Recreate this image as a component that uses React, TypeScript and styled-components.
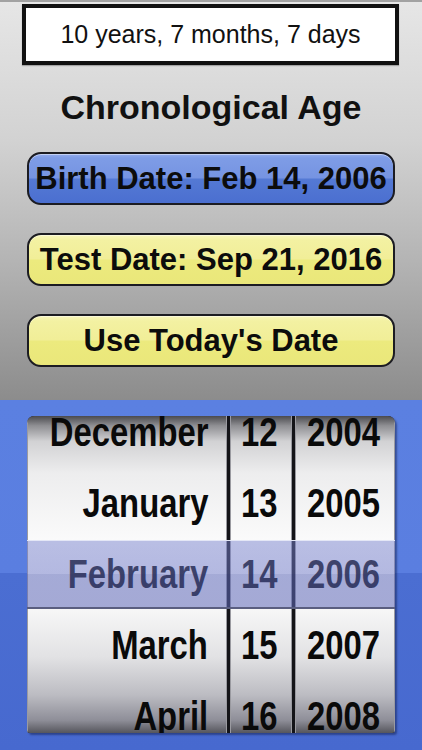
import React from "react";
import styled, { createGlobalStyle } from "styled-components";

const Global = createGlobalStyle`
  html, body { margin: 0; padding: 0; }
  body { width: 422px; height: 750px; overflow: hidden; font-family: "Liberation Sans", Arial, sans-serif; }
  * { box-sizing: border-box; }
`;

const Screen = styled.div`
  width: 422px;
  height: 750px;
  display: flex;
  flex-direction: column;
`;

const TopPanel = styled.div`
  height: 400px;
  display: flex;
  flex-direction: column;
  align-items: flex-start;
  border-top: 2px solid #a2a2a2;
  background: linear-gradient(to bottom, #e6e6e6 0%, #d2d2d2 35%, #b4b4b4 65%, #8c8c8c 100%);
`;

const ResultBox = styled.div`
  margin: 2px 0 0 22px;
  width: 377px;
  height: 61px;
  border: 4px solid #111;
  background: #fff;
  display: flex;
  align-items: center;
  justify-content: center;
  font-size: 25px;
  color: #111;
  box-shadow: 0 1px 1px rgba(0, 0, 0, 0.25);
`;

const Title = styled.div`
  margin-top: 22px;
  width: 422px;
  text-align: center;
  font-size: 34px;
  line-height: 40px;
  font-weight: bold;
  color: #111;
`;

const GlossButton = styled.div<{ $tone: "blue" | "yellow"; $gap: number }>`
  margin: ${(p) => p.$gap}px 0 0 27px;
  width: 368px;
  height: 53px;
  border: 2px solid #1c1c22;
  border-radius: 14px;
  display: flex;
  align-items: center;
  justify-content: center;
  font-size: 31px;
  font-weight: bold;
  color: #0c0c0c;
  background: ${(p) =>
    p.$tone === "blue"
      ? "linear-gradient(to bottom, #94acec 0%, #7e9ce6 8%, #7694e2 48%, #5479d4 52%, #4b6fd0 100%)"
      : "linear-gradient(to bottom, #f8f6bc 0%, #f3f1a2 10%, #f1ee98 48%, #ecea7e 52%, #eae77a 100%)"};
  box-shadow: inset 0 1px 0 rgba(255, 255, 255, 0.45);
`;

const BottomPanel = styled.div`
  flex: 1;
  padding: 16px 0 0 27px;
  background: linear-gradient(to bottom, #5b80e1 0%, #5a7ee0 173px, #4b6ed2 173px, #4769cf 100%);
`;

const Picker = styled.div`
  position: relative;
  width: 368px;
  height: 317px;
  border-radius: 7px 7px 3px 3px;
  overflow: hidden;
  display: flex;
  gap: 3px;
  background: #141418;
  box-shadow: 2px 2px 2px rgba(10, 20, 60, 0.45);
`;

const Wheel = styled.div<{ $w: number }>`
  width: ${(p) => p.$w}px;
  height: 100%;
  overflow: hidden;
  border-left: 1px solid #9a9aa0;
  border-right: 1px solid #9a9aa0;
  background: linear-gradient(
    to bottom,
    #4a4a4e 0%,
    #8e8e92 3%,
    #d2d2d4 8%,
    #ededee 18%,
    #fbfbfb 40%,
    #f8f8f8 60%,
    #e2e2e4 76%,
    #bcbcc2 88%,
    #8e8e98 96%,
    #55555c 100%
  );
`;

const WheelList = styled.div`
  margin-top: -19px;
  display: flex;
  flex-direction: column;
`;

const WheelRow = styled.div<{ $align: "right" | "center" }>`
  height: 71px;
  display: flex;
  align-items: center;
  justify-content: ${(p) => (p.$align === "right" ? "flex-end" : "center")};
  padding: ${(p) => (p.$align === "right" ? "0 18px 0 0" : "0 4px 0 0")};
  white-space: nowrap;
`;

const WheelText = styled.span<{ $align: "right" | "center"; $selected?: boolean }>`
  display: block;
  flex: none;
  line-height: 71px;
  font-family: "Liberation Sans", Arial, sans-serif;
  font-weight: bold;
  font-size: 40px;
  color: #0a0a0a;
  transform: scaleX(0.82);
  transform-origin: ${(p) => (p.$align === "right" ? "right center" : "center center")};
  text-shadow: ${(p) => (p.$selected ? "0 1px 0 rgba(255,255,255,0.9)" : "none")};
`;

const SelectionBand = styled.div`
  position: absolute;
  left: 0;
  right: 0;
  top: 124px;
  height: 69px;
  border-top: 1px solid #e4e7f6;
  border-bottom: 2px solid #5a5e80;
  background: linear-gradient(
    to bottom,
    rgba(120, 130, 205, 0.5) 0%,
    rgba(110, 120, 200, 0.5) 50%,
    rgba(95, 105, 185, 0.55) 50%,
    rgba(95, 105, 185, 0.55) 100%
  );
  pointer-events: none;
`;

const months = ["December", "January", "February", "March", "April"];
const days = ["12", "13", "14", "15", "16"];
const years = ["2004", "2005", "2006", "2007", "2008"];

function Column({ items, width, align }: { items: string[]; width: number; align: "right" | "center" }) {
  return (
    <Wheel $w={width}>
      <WheelList>
        {items.map((it, i) => (
          <WheelRow key={it} $align={align}>
            <WheelText $align={align} $selected={i === 2}>
              {it}
            </WheelText>
          </WheelRow>
        ))}
      </WheelList>
    </Wheel>
  );
}

export default function App() {
  return (
    <Screen>
      <Global />
      <TopPanel>
        <ResultBox>10 years, 7 months, 7 days</ResultBox>
        <Title>Chronological Age</Title>
        <GlossButton $tone="blue" $gap={25}>Birth Date: Feb 14, 2006</GlossButton>
        <GlossButton $tone="yellow" $gap={28}>Test Date: Sep 21, 2016</GlossButton>
        <GlossButton $tone="yellow" $gap={28}>Use Today's Date</GlossButton>
      </TopPanel>
      <BottomPanel>
        <Picker>
          <Column items={months} width={200} align="right" />
          <Column items={days} width={62} align="center" />
          <Column items={years} width={100} align="center" />
          <SelectionBand />
        </Picker>
      </BottomPanel>
    </Screen>
  );
}
